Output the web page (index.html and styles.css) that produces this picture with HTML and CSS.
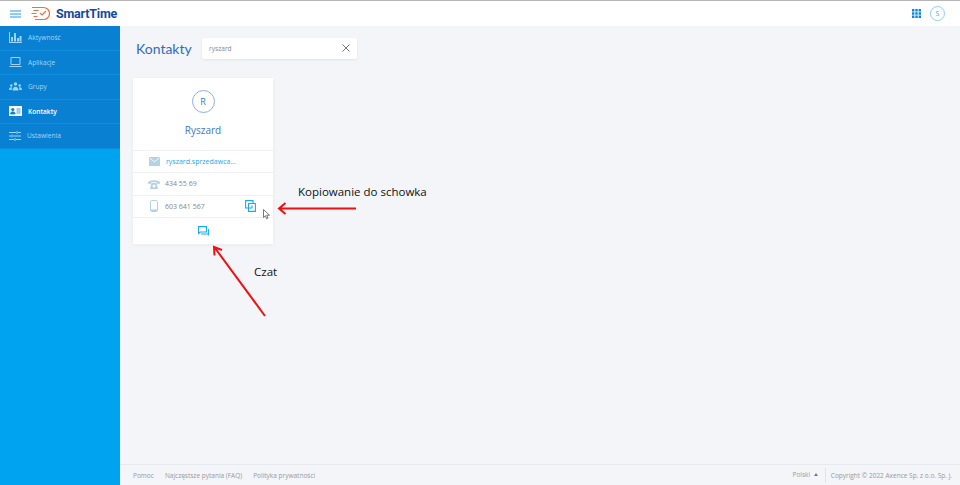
FILE: index.html
```html
<!DOCTYPE html>
<html lang="en">
<head>
    <meta charset="UTF-8">
    <title>SmartTime - Kontakty</title>
    <link rel="stylesheet" href="styles.css">
</head>
<body>
    <header class="topbar">
        <div class="brand">
            <svg class="burger" width="11" height="8" viewBox="0 0 11 8"><path d="M0 1h11M0 4h11M0 7h11" stroke="#1e9be8" stroke-width="1.1" fill="none"/></svg>
            <svg class="logo" width="19" height="15" viewBox="0 0 19 15" fill="none" stroke="#ee6f3a" stroke-width="1.2"><path d="M1 1.500h11.500a6 6 0 0 1 0 12H4M2.500 4.500h5M0.500 7.500h5M2.500 10.500h4"/><path d="M9 7l2 2 4-4"/></svg>
            <span class="brand-name">SmartTime</span>
        </div>
        <div class="top-actions">
            <svg width="9" height="9" viewBox="0 0 9 9" fill="#0b86dc"><path d="M0 0h2.400v2.400H0zM3.300 0h2.400v2.400H3.300zM6.600 0H9v2.400H6.600zM0 3.300h2.400v2.400H0zM3.300 3.300h2.400v2.400H3.300zM6.600 3.300H9v2.400H6.600zM0 6.600h2.400V9H0zM3.300 6.600h2.400V9H3.300zM6.600 6.600H9V9H6.600z"/></svg>
            <span class="avatar-small">S</span>
        </div>
    </header>
    <div class="layout">
        <nav class="sidebar">
            <a class="nav-item" href="#">
                <svg width="13" height="11" viewBox="0 0 13 11" fill="#9fd4f5"><path d="M0 0h1v10h12v1H0zM2 5h2v4.500H2zM5 1h2v8.500H5zM8 6h2v3.500H8zM10.500 4h2v5.500h-2z"/></svg>
                Aktywność
            </a>
            <a class="nav-item" href="#">
                <svg width="13" height="10" viewBox="0 0 13 10" fill="none" stroke="#9fd4f5"><path d="M2 .5h9v7H2zM.5 9.500h12"/></svg>
                Aplikacje
            </a>
            <a class="nav-item" href="#">
                <svg width="13" height="9" viewBox="0 0 13 9" fill="#9fd4f5"><circle cx="6.500" cy="2" r="1.700"/><circle cx="2.300" cy="3.500" r="1.200"/><circle cx="10.700" cy="3.500" r="1.200"/><path d="M3.500 8.500c0-5 6-5 6 0zM0 8c0-2.500 2-3 3-2.500L2.500 8zM13 8c0-2.500-2-3-3-2.500l.5 2.500z"/></svg>
                Grupy
            </a>
            <a class="nav-item active" href="#">
                <svg width="13" height="10" viewBox="0 0 13 10"><path d="M0 0h13v10H0z" fill="#fff"/><circle cx="3.800" cy="3.500" r="1.600" fill="#0b7fd0"/><path d="M1.500 8c0-3 4.600-3 4.600 0zM7.500 3h4M7.500 5h4M7.500 7h4" fill="#0b7fd0" stroke="#0b7fd0" stroke-width=".8"/></svg>
                Kontakty
            </a>
            <a class="nav-item" href="#">
                <svg width="12" height="10" viewBox="0 0 12 10" fill="none" stroke="#9fd4f5"><path d="M0 1.500h7M9 1.500h3M0 5h2M4 5h8M0 8.500h5M7 8.500h5M8 0v3M3 3.500v3M6 7v3"/></svg>
                Ustawienia
            </a>
        </nav>
        <div class="main">
            <main class="content">
                <div class="page-head">
                    <h1>Kontakty</h1>
                    <div class="search">
                        <span>ryszard</span>
                        <svg width="8" height="8" viewBox="0 0 8 8"><path d="M.5.500l7 7M7.500.500l-7 7" stroke="#666" stroke-width=".9"/></svg>
                    </div>
                </div>
                <section class="card">
                    <div class="card-head">
                        <div class="avatar">R</div>
                        <div class="card-name">Ryszard</div>
                    </div>
                    <div class="row">
                        <span class="row-icon"><svg width="11" height="9" viewBox="0 0 11 9"><path d="M0 0h11v9H0z" fill="#b3d3e4"/><path d="M.5.800l5 4 5-4" fill="none" stroke="#fff" stroke-width=".8"/></svg></span>
                        <a class="mail" href="#">ryszard.sprzedawca...</a>
                    </div>
                    <div class="row">
                        <span class="row-icon"><svg width="12" height="10" viewBox="0 0 12 10" fill="#b3d3e4"><path d="M0 3.500C1 .5 11 .5 12 3.500v1.300H8.800V3.300H3.200v1.500H0z"/><path d="M3.500 4h5l1.500 6H2z"/><circle cx="6" cy="7" r="1.500" fill="#fff"/></svg></span>
                        <span>434 55 69</span>
                    </div>
                    <div class="row">
                        <span class="row-icon"><svg width="8" height="12" viewBox="0 0 8 12"><rect x=".5" y=".5" width="7" height="11" rx="1.200" fill="#fff" stroke="#b3d3e4"/><path d="M1 9.500h6v1.500H1z" fill="#b3d3e4"/></svg></span>
                        <span>603 641 567</span>
                        <svg class="copy" width="11" height="12" viewBox="0 0 11 12" fill="none" stroke="#18aaf5" stroke-width="1.100"><path d="M8 3.500V.6H.6V8H3.500"/><path d="M3.500 3.500h6.900v7.900H3.500zM3.500 8h3.500V5.500"/></svg>
                    </div>
                    <div class="chat">
                        <svg width="11" height="10" viewBox="0 0 11 10" fill="none" stroke="#18aaf5" stroke-width="1.100"><path d="M.6.600h7.800v5.400H2.200L.6 7.500zM10.400 3v6.400M3 8h7.400"/></svg>
                    </div>
                </section>
            </main>
            <footer class="footer">
                <div class="footer-links">
                    <a href="#">Pomoc</a>
                    <a href="#">Najczęstsze pytania (FAQ)</a>
                    <a href="#">Polityka prywatności</a>
                </div>
                <div class="footer-right">
                    <span class="lang">Polski <i class="caret"></i></span>
                    <span class="copyright">Copyright © 2022 Axence Sp. z o.o. Sp. j.</span>
                </div>
            </footer>
        </div>
    </div>

    <!-- screenshot annotations -->
    <svg class="arrows" width="960" height="485" viewBox="0 0 960 485" fill="none" stroke="#f01010" stroke-width="2">
        <path d="M356 208.500H279M285.500 203l-6.500 5.500 6.500 5.500"/>
        <path d="M265 316L215 248M214.500 255.500l-.5-8.500 8 3"/>
    </svg>
    <svg class="pointer" width="8" height="11" viewBox="0 0 8 11"><path d="M.5.500v8l2-1.800 1 3 1.500-.6-1.200-2.900h2.700z" fill="#fff" stroke="#555" stroke-width=".8"/></svg>
    <span class="note note-copy">Kopiowanie do schowka</span>
    <span class="note note-chat">Czat</span>
</body>
</html>
```

FILE: styles.css
```css
* {
    box-sizing: border-box;
}
html, body {
    height: 100%;
}
body {
    margin: 0;
    background-color: #f3f5f9;
    font-family: "Open Sans", sans-serif;
    color: #888;
    overflow: hidden;
    display: flex;
    flex-direction: column;
}
a {
    text-decoration: none;
    color: inherit;
}
.topbar {
    flex: none;
    height: 26px;
    background: white;
    border-top: 1px solid #b5b5b5;
    display: flex;
    justify-content: space-between;
    align-items: center;
    padding: 0 15px 0 10px;
}
.brand {
    display: flex;
    align-items: center;
}
.burger {
    margin-right: 10px;
}
.logo {
    margin-right: 6px;
}
.brand-name {
    font-family: Roboto, sans-serif;
    font-size: 12.500px;
    font-weight: 700;
    color: #17479e;
    letter-spacing: -0.2px;
}
.top-actions {
    display: flex;
    align-items: center;
    gap: 9px;
}
.avatar-small {
    width: 15px;
    height: 15px;
    border: 1px solid #8ccff5;
    border-radius: 50%;
    font-size: 7px;
    color: #4aa8e0;
    display: flex;
    justify-content: center;
    align-items: center;
}
.layout {
    flex: 1;
    display: flex;
    min-height: 0;
}
.sidebar {
    flex: none;
    width: 120px;
    background-color: #00a3f0;
}
.nav-item {
    height: 24.500px;
    padding-left: 9px;
    display: flex;
    align-items: center;
    gap: 6px;
    background-color: #0a80d2;
    border-bottom: 1px solid #0d8ddd;
    font-size: 6.600px;
    color: #a3d6f6;
}
.nav-item svg {
    flex: none;
}
.nav-item.active {
    color: white;
    font-weight: 600;
}
.main {
    flex: 1;
    min-width: 0;
    display: flex;
    flex-direction: column;
}
.content {
    flex: 1;
    padding: 11px 13px;
}
.page-head {
    display: flex;
    align-items: center;
    height: 22px;
    margin-bottom: 19px;
}
.page-head h1 {
    width: 55px;
    margin: 0 11px 0 3px;
    font-family: Lato, sans-serif;
    font-size: 14px;
    font-weight: 400;
    white-space: nowrap;
    color: #2f6dba;
}
.search {
    width: 155px;
    height: 21px;
    background: white;
    border-radius: 2px;
    box-shadow: 0 1px 3px rgba(0, 0, 0, 0.08);
    display: flex;
    justify-content: space-between;
    align-items: center;
    padding: 0 7px;
    font-size: 6.600px;
    color: #888;
}
.card {
    width: 140px;
    height: 166px;
    background: white;
    box-shadow: 0 1px 4px rgba(0, 0, 0, 0.05);
    display: flex;
    flex-direction: column;
}
.card-head {
    height: 72px;
    padding-top: 12px;
    display: flex;
    flex-direction: column;
    align-items: center;
}
.avatar {
    width: 23px;
    height: 23px;
    border: 1px solid #8db0e0;
    border-radius: 50%;
    font-size: 9px;
    color: #3f78c0;
    display: flex;
    justify-content: center;
    align-items: center;
}
.card-name {
    margin-top: 10px;
    font-size: 10px;
    color: #3f78c0;
}
.row {
    height: 22.300px;
    border-top: 1px solid #eef0f4;
    padding-left: 15px;
    display: flex;
    align-items: center;
    font-size: 7px;
    color: #888;
}
.row-icon {
    flex: none;
    width: 12px;
    margin-right: 5px;
    display: flex;
    justify-content: center;
}
.mail {
    margin-left: 1px;
    color: #1ea7ec;
}
.copy {
    margin-left: auto;
    margin-right: 17px;
}
.chat {
    flex: 1;
    border-top: 1px solid #eef0f4;
    display: flex;
    justify-content: center;
    align-items: center;
}
.footer {
    flex: none;
    height: 21px;
    border-top: 1px solid #e6e9ef;
    display: flex;
    justify-content: space-between;
    align-items: center;
    padding: 0 8px 0 13px;
    font-size: 6.500px;
    color: #999;
}
.footer-links {
    display: flex;
    gap: 11px;
}
.footer-right {
    display: flex;
    align-items: center;
}
.lang {
    padding-right: 7px;
    margin-right: 5px;
    border-right: 1px solid #dfe3ea;
    line-height: 14px;
}
.caret {
    display: inline-block;
    margin-left: 2px;
    vertical-align: 1px;
    border-left: 2.500px solid transparent;
    border-right: 2.500px solid transparent;
    border-bottom: 3px solid #777;
}
.arrows {
    position: absolute;
    left: 0;
    top: 0;
    pointer-events: none;
}
.pointer {
    position: absolute;
    left: 263px;
    top: 209px;
}
.note {
    position: absolute;
    font-family: "Open Sans", sans-serif;
    font-size: 11.500px;
    line-height: 16px;
    color: #111;
}
.note-copy {
    left: 298px;
    top: 184px;
}
.note-chat {
    left: 254px;
    top: 264px;
}
```
